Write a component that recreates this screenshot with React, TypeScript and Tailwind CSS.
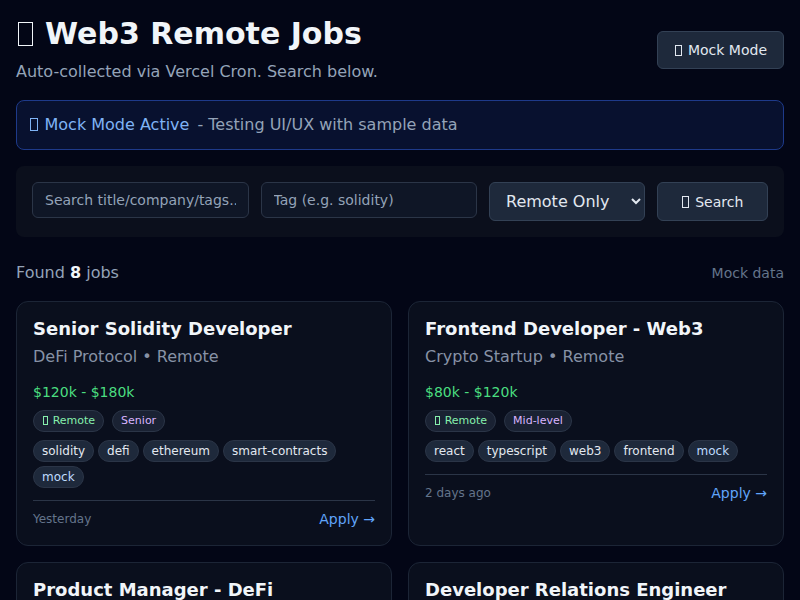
import React from 'react';

type Job = {
  id: number;
  title: string;
  company: string;
  location: string;
  salary: string;
  level: string;
  tags: string[];
  posted: string;
};

const jobs: Job[] = [
  {
    id: 1,
    title: 'Senior Solidity Developer',
    company: 'DeFi Protocol',
    location: 'Remote',
    salary: '$120k - $180k',
    level: 'Senior',
    tags: ['solidity', 'defi', 'ethereum', 'smart-contracts'],
    posted: 'Yesterday',
  },
  {
    id: 2,
    title: 'Frontend Developer - Web3',
    company: 'Crypto Startup',
    location: 'Remote',
    salary: '$80k - $120k',
    level: 'Mid-level',
    tags: ['react', 'typescript', 'web3', 'frontend'],
    posted: '2 days ago',
  },
  {
    id: 3,
    title: 'Product Manager - DeFi',
    company: 'Yield Labs',
    location: 'Remote',
    salary: '$130k - $170k',
    level: 'Senior',
    tags: ['product', 'defi', 'strategy'],
    posted: '3 days ago',
  },
  {
    id: 4,
    title: 'Developer Relations Engineer',
    company: 'L2 Network',
    location: 'Remote',
    salary: '$100k - $150k',
    level: 'Mid-level',
    tags: ['devrel', 'community', 'docs'],
    posted: '4 days ago',
  },
];

// the emoji have no font here, so they show as an empty box
const Tofu: React.FC = () => (
  <span className="inline-block ml-[0.05em] w-[0.5em] h-[0.8em] border border-current align-[-0.08em] mr-[0.42em]" />
);

const JobCard: React.FC<{ job: Job }> = ({ job }) => (
  <div className="rounded-xl border border-[#1c2536] bg-[#0a0f1d] p-4 flex flex-col">
    <h3 className="text-lg leading-[22px] font-bold text-[#f1f5f9]">{job.title}</h3>
    <p className="mt-[5px] text-base text-[#8792a6]">
      {job.company} • {job.location}
    </p>
    <p className="mt-[13px] text-sm text-[#4ade80]">{job.salary}</p>

    {/* badges */}
    <div className="mt-2 flex gap-2">
      <span className="px-2 py-[3px] leading-[14px] rounded-full border border-[#2b3547] bg-[#1a2233] text-[11px] text-[#86efac]">
        <Tofu />Remote
      </span>
      <span className="px-2 py-[3px] leading-[14px] rounded-full border border-[#2b3547] bg-[#1a2233] text-[11px] text-[#d8b4fe]">
        {job.level}
      </span>
    </div>

    <div className="mt-2 flex flex-wrap gap-x-1 gap-y-1">
      {job.tags.map((tag) => (
        <span key={tag} className="px-2 py-0.5 rounded-full border border-[#2b3547] bg-[#1e293b] text-xs text-[#e2e8f0]">
          {tag}
        </span>
      ))}
      <span className="px-2 py-0.5 rounded-full border border-[#2b3547] bg-[#1e293b] text-xs text-[#bfdbfe]">
        mock
      </span>
    </div>

    <div className="mt-3 pt-2 border-t border-[#2b3547] flex items-center justify-between">
      <span className="text-xs text-[#64748b]">{job.posted}</span>
      <span className="text-sm text-[#60a5fa]">Apply →</span>
    </div>
  </div>
);

export default function App() {
  return (
    <div className="min-h-screen bg-[#030616] text-[#e2e8f0] px-4 pt-4 pb-10" style={{ fontFamily: '"DejaVu Sans", sans-serif' }}>
      {/* header */}
      <div className="flex items-center justify-between">
        <div>
          <h1 className="text-3xl leading-9 font-bold text-[#f1f5f9]"><Tofu />Web3 Remote Jobs</h1>
          <p className="mt-2 text-base text-[#94a3b8]">Auto-collected via Vercel Cron. Search below.</p>
        </div>
        <button className="h-[38px] px-4 rounded-md border border-[#334155] bg-[#1e293b] text-sm text-[#e2e8f0]">
          <Tofu />Mock Mode
        </button>
      </div>

      {/* mock banner */}
      <div className="mt-4 h-[50px] flex items-center px-3 rounded-lg border border-[#1e3a8a] bg-[#08112f] text-base">
        <span className="text-[#7fb3f5]"><Tofu />Mock Mode Active</span>
        <span className="ml-2 text-[#94a3b8]">- Testing UI/UX with sample data</span>
      </div>

      {/* filters */}
      <div className="mt-4 rounded-lg bg-[#0b0f1c] p-4 flex items-start gap-3">
        <input
          className="flex-1 min-w-0 h-9 px-3 rounded-md border border-[#2b3547] bg-[#0f1626] text-sm text-[#e2e8f0] placeholder:text-[#94a3b8] outline-none"
          placeholder="Search title/company/tags..."
        />
        <input
          className="flex-1 min-w-0 h-9 px-3 rounded-md border border-[#2b3547] bg-[#0f1626] text-sm text-[#e2e8f0] placeholder:text-[#94a3b8] outline-none"
          placeholder="Tag (e.g. solidity)"
        />
        <select className="w-[156px] h-[39px] px-3 rounded-md border border-[#334155] bg-[#1e293b] text-base text-[#e2e8f0]" defaultValue="remote">
          <option value="remote">Remote Only</option>
          <option value="all">All</option>
        </select>
        <button className="w-[111px] h-[39px] rounded-md border border-[#334155] bg-[#1e293b] text-sm text-[#e2e8f0]">
          <Tofu />Search
        </button>
      </div>

      {/* results */}
      <div className="mt-6 flex items-center justify-between">
        <p className="text-base text-[#94a3b8]">
          Found <span className="font-bold text-[#f1f5f9]">8</span> jobs
        </p>
        <span className="text-sm text-[#64748b]">Mock data</span>
      </div>

      <div className="mt-4 grid grid-cols-2 gap-4">
        {jobs.map((job) => (
          <JobCard key={job.id} job={job} />
        ))}
      </div>
    </div>
  );
}
